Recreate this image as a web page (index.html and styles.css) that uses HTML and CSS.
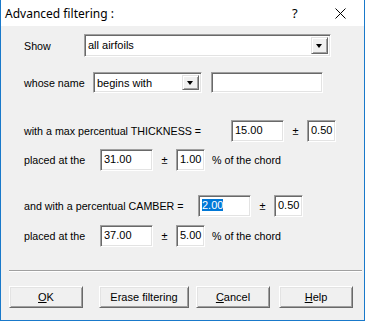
FILE: index.html
```html
<!DOCTYPE html>
<html lang="en">

<head>
    <meta charset="utf-8">
    <title>Advanced filtering</title>
    <link rel="stylesheet" href="styles.css">
</head>

<body>

    <div class="vindue">
        <header class="titel">
            <span class="titeltekst">Advanced filtering :</span>
            <span class="hjaelp">?</span>
            <svg class="luk" width="11" height="11" viewBox="0 0 11 11">
                <path d="M0.5 0.5 L10.5 10.5 M10.5 0.5 L0.5 10.5" stroke="#000" stroke-width="1" fill="none" />
            </svg>
        </header>

        <main class="indhold">
            <div class="raekke r-vis">
                <span class="label l-vis">Show</span>
                <div class="felt combo c-vis">
                    <span class="tekst">all airfoils</span>
                    <span class="pil"></span>
                </div>
            </div>

            <div class="raekke r-navn">
                <span class="label l-navn">whose name</span>
                <div class="felt combo c-navn">
                    <span class="tekst">begins with</span>
                    <span class="pil"></span>
                </div>
                <div class="felt f-navn"></div>
            </div>

            <div class="raekke r-tyk">
                <span class="label l-tyk">with a max percentual THICKNESS =</span>
                <div class="felt tal">15.00</div>
                <span class="pm">±</span>
                <div class="felt lille">0.50</div>
            </div>

            <div class="raekke r-sted1">
                <span class="label l-sted">placed at the</span>
                <div class="felt tal">31.00</div>
                <span class="pm">±</span>
                <div class="felt lille">1.00</div>
                <span class="label korde">% of the chord</span>
            </div>

            <div class="raekke r-camber">
                <span class="label l-camber">and with a percentual CAMBER =</span>
                <div class="felt tal"><span class="valgt">2.00</span></div>
                <span class="pm">±</span>
                <div class="felt lille">0.50</div>
            </div>

            <div class="raekke r-sted2">
                <span class="label l-sted">placed at the</span>
                <div class="felt tal">37.00</div>
                <span class="pm">±</span>
                <div class="felt lille">5.00</div>
                <span class="label korde">% of the chord</span>
            </div>

            <div class="skillelinje"></div>

            <div class="knapper">
                <button class="knap k-ok"><u>O</u>K</button>
                <button class="knap k-slet">Erase filtering</button>
                <button class="knap k-annuller"><u>C</u>ancel</button>
                <button class="knap k-hjaelp"><u>H</u>elp</button>
            </div>
        </main>
    </div>

</body>

</html>
```

FILE: styles.css
```css
* {
    box-sizing: border-box;
}

body {
    margin: 0;
    background-color: #f0f0f0;
}

.vindue {
    width: 365px;
    height: 321px;
    border: 1px solid #1979ca;
    border-top: none;
    background-color: #f0f0f0;
    font-family: "Liberation Sans", Arial, sans-serif;
    font-size: 11px;
    color: #000;
}

.titel {
    height: 26px;
    background-color: #fff;
    display: flex;
    align-items: center;
    padding-left: 4px;
}

.titeltekst {
    font-family: "Noto Sans", sans-serif;
    font-size: 12px;
    width: 287px;
}

.hjaelp {
    font-family: "Noto Sans", sans-serif;
    font-size: 13px;
    width: 43px;
}

.luk {
    display: block;
}

.indhold {
    padding-left: 23px;
}

.raekke {
    display: flex;
    align-items: center;
}

.label {
    white-space: nowrap;
    font-size: 10.7px;
}

.felt {
    background-color: #fff;
    border-top: 1px solid #a0a0a0;
    border-left: 1px solid #a0a0a0;
    border-bottom: 1px solid #fff;
    border-right: 1px solid #fff;
    box-shadow: inset 1px 1px #696969, inset -1px -1px #e3e3e3;
    height: 22px;
    padding: 2px 0 0 3px;
    line-height: 14px;
}

.combo {
    display: flex;
    align-items: flex-start;
    padding: 2px 2px 2px 3px;
}

.combo .tekst {
    flex: 1;
    padding-top: 1px;
}

.pil {
    width: 17px;
    height: 17px;
    background-color: #f0f0f0;
    border-top: 1px solid #e3e3e3;
    border-left: 1px solid #e3e3e3;
    border-bottom: 1px solid #696969;
    border-right: 1px solid #696969;
    box-shadow: inset 1px 1px #fff, inset -1px -1px #a0a0a0;
    position: relative;
}

.pil::after {
    content: "";
    position: absolute;
    left: 4px;
    top: 6px;
    border-left: 3.5px solid transparent;
    border-right: 3.5px solid transparent;
    border-top: 4px solid #000;
}

/* raekker */

.r-vis {
    margin-top: 8px;
}

.l-vis {
    width: 60px;
}

.c-vis {
    width: 247px;
    height: 23px;
}

.r-navn {
    margin-top: 15px;
}

.l-navn {
    width: 69px;
}

.c-navn {
    width: 109px;
    height: 21px;
}

.c-navn .pil {
    height: 15px;
}

.c-navn .pil::after {
    top: 5px;
}

.f-navn {
    width: 112px;
    height: 21px;
    margin-left: 9px;
}

.r-tyk {
    margin-top: 27px;
}

.l-tyk {
    width: 207px;
}

.tal {
    width: 53px;
}

.lille {
    width: 29px;
}

.pm {
    width: 23px;
    text-align: center;
}

.korde {
    margin-left: 7px;
}

.r-sted1 {
    margin-top: 7px;
}

.l-sted {
    width: 76px;
}

.r-camber {
    margin-top: 24px;
}

.l-camber {
    width: 174px;
}

.valgt {
    background-color: #0078d7;
    color: #fff;
}

.r-sted2 {
    margin-top: 8px;
}

.skillelinje {
    margin: 23px 2px 0 -15px;
    height: 2px;
    border-top: 1px solid #a0a0a0;
    border-bottom: 1px solid #fff;
}

.knapper {
    display: flex;
    margin-top: 14px;
    margin-left: -15px;
}

.knap {
    height: 22px;
    width: 74px;
    padding: 0;
    font-family: "Liberation Sans", Arial, sans-serif;
    font-size: 11px;
    color: #000;
    background-color: #f0f0f0;
    border-top: 1px solid #fff;
    border-left: 1px solid #fff;
    border-bottom: 1px solid #696969;
    border-right: 1px solid #696969;
    box-shadow: inset 1px 1px #e3e3e3, inset -1px -1px #a0a0a0;
}

.k-slet {
    width: 90px;
    margin-left: 16px;
}

.k-annuller {
    margin-left: 7px;
}

.k-hjaelp {
    margin-left: 9px;
}
```
